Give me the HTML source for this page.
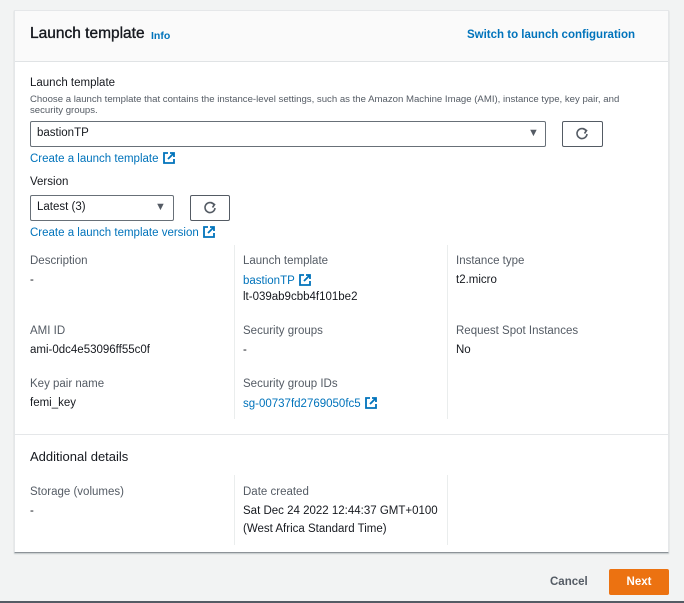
<!DOCTYPE html>
<html><head><meta charset="utf-8"><style>
*{margin:0;padding:0;box-sizing:border-box}
body{width:684px;height:603px;background:#f2f3f3;font-family:"Liberation Sans",Arial,sans-serif;color:#16191f;position:relative;overflow:hidden;font-size:11.5px}
.a{position:absolute;white-space:nowrap}
.card{position:absolute;left:14px;top:10px;width:655px;height:543px;background:#fff;border:1px solid #e5e7e9;border-bottom:1px solid #8d9398;box-shadow:0 1px 1px rgba(0,28,36,.2)}
.hdr{position:absolute;left:0;top:0;width:100%;height:51px;background:#fafafa;border-bottom:1px solid #e0e3e5}
.lnk{color:#0073bb}
.lbl{color:#545b64}
.sel{position:absolute;border:1px solid #687078;border-radius:2px;background:#fff}
.btn{position:absolute;border:1px solid #545b64;border-radius:2px;background:#fff}
.vl{position:absolute;width:1px;background:#eaeded}
.ext{display:inline-block;vertical-align:-2px;margin-left:4px}
</style></head><body>
<div class="card">
<div class="hdr"></div>
</div>
<div class="a" style="left:30px;top:25px;font-size:15.5px;-webkit-text-stroke:0.35px #16191f;color:#16191f">Launch template</div>
<div class="a lnk" style="left:151px;top:30px;font-size:10.5px;font-weight:bold">Info</div>
<div class="a lnk" style="left:467px;top:29px;font-size:11.5px;font-weight:bold">Switch to launch configuration</div>

<div class="a" style="left:30px;top:77px;font-size:11.5px">Launch template</div>
<div class="a lbl" style="left:30px;top:94px;font-size:9.6px">Choose a launch template that contains the instance-level settings, such as the Amazon Machine Image (AMI), instance type, key pair, and</div>
<div class="a lbl" style="left:30px;top:105px;font-size:9.6px">security groups.</div>
<div class="sel" style="left:30px;top:121px;width:516px;height:26px"></div>
<div class="a" style="left:37px;top:127px;font-size:11.5px">bastionTP</div>
<div class="a" style="left:528px;top:127px;font-size:11px;color:#545b64">▼</div>
<div class="btn" style="left:562px;top:121px;width:41px;height:26px"></div>
<svg class="a" style="left:575px;top:127px" width="14" height="14" viewBox="0 0 14 14"><path d="M11 3.5A5 5 0 1 0 12 7" fill="none" stroke="#545b64" stroke-width="1.6"/><path d="M8 1.5L11.5 3.5L9.5 6.5" fill="none" stroke="#545b64" stroke-width="1.6"/></svg>
<div class="a lnk" style="left:30px;top:152px;font-size:11.5px">Create a launch template<svg class="ext" width="12" height="12" viewBox="0 0 12 12"><path d="M5 1H1v10h10V7" fill="none" stroke="#0073bb" stroke-width="1.8"/><path d="M7 1h4v4M11 1L5 7" fill="none" stroke="#0073bb" stroke-width="1.8"/></svg></div>

<div class="a" style="left:30px;top:176px;font-size:11.5px">Version</div>
<div class="sel" style="left:30px;top:195px;width:144px;height:26px"></div>
<div class="a" style="left:37px;top:201px;font-size:11.5px">Latest (3)</div>
<div class="a" style="left:155px;top:201px;font-size:11px;color:#545b64">▼</div>
<div class="btn" style="left:190px;top:195px;width:40px;height:26px"></div>
<svg class="a" style="left:203px;top:201px" width="14" height="14" viewBox="0 0 14 14"><path d="M11 3.5A5 5 0 1 0 12 7" fill="none" stroke="#545b64" stroke-width="1.6"/><path d="M8 1.5L11.5 3.5L9.5 6.5" fill="none" stroke="#545b64" stroke-width="1.6"/></svg>
<div class="a lnk" style="left:30px;top:226px;font-size:11.5px">Create a launch template version<svg class="ext" width="12" height="12" viewBox="0 0 12 12"><path d="M5 1H1v10h10V7" fill="none" stroke="#0073bb" stroke-width="1.8"/><path d="M7 1h4v4M11 1L5 7" fill="none" stroke="#0073bb" stroke-width="1.8"/></svg></div>

<div class="vl" style="left:234px;top:245px;height:174px"></div>
<div class="vl" style="left:447px;top:245px;height:174px"></div>

<div class="a lbl" style="left:30px;top:255px">Description</div>
<div class="a" style="left:30px;top:274px">-</div>
<div class="a lbl" style="left:243px;top:255px">Launch template</div>
<div class="a lnk" style="left:243px;top:274px">bastionTP<svg class="ext" width="12" height="12" viewBox="0 0 12 12"><path d="M5 1H1v10h10V7" fill="none" stroke="#0073bb" stroke-width="1.8"/><path d="M7 1h4v4M11 1L5 7" fill="none" stroke="#0073bb" stroke-width="1.8"/></svg></div>
<div class="a" style="left:243px;top:291px">lt-039ab9cbb4f101be2</div>
<div class="a lbl" style="left:456px;top:255px">Instance type</div>
<div class="a" style="left:456px;top:274px">t2.micro</div>

<div class="a lbl" style="left:30px;top:325px">AMI ID</div>
<div class="a" style="left:30px;top:344px">ami-0dc4e53096ff55c0f</div>
<div class="a lbl" style="left:243px;top:325px">Security groups</div>
<div class="a" style="left:243px;top:344px">-</div>
<div class="a lbl" style="left:456px;top:325px">Request Spot Instances</div>
<div class="a" style="left:456px;top:344px">No</div>

<div class="a lbl" style="left:30px;top:378px">Key pair name</div>
<div class="a" style="left:30px;top:397px">femi_key</div>
<div class="a lbl" style="left:243px;top:378px">Security group IDs</div>
<div class="a lnk" style="left:243px;top:397px">sg-00737fd2769050fc5<svg class="ext" width="12" height="12" viewBox="0 0 12 12"><path d="M5 1H1v10h10V7" fill="none" stroke="#0073bb" stroke-width="1.8"/><path d="M7 1h4v4M11 1L5 7" fill="none" stroke="#0073bb" stroke-width="1.8"/></svg></div>

<div class="a" style="left:15px;top:434px;width:653px;height:1px;background:#e5e7e9"></div>
<div class="a" style="left:30px;top:449px;font-size:13px">Additional details</div>
<div class="vl" style="left:234px;top:475px;height:70px"></div>
<div class="vl" style="left:447px;top:475px;height:70px"></div>
<div class="a lbl" style="left:30px;top:486px">Storage (volumes)</div>
<div class="a" style="left:30px;top:505px">-</div>
<div class="a lbl" style="left:243px;top:486px">Date created</div>
<div class="a" style="left:243px;top:505px">Sat Dec 24 2022 12:44:37 GMT+0100</div>
<div class="a" style="left:243px;top:523px">(West Africa Standard Time)</div>

<div class="a" style="left:550px;top:576px;font-weight:bold;color:#545b64">Cancel</div>
<div class="a" style="left:609px;top:569px;width:60px;height:26px;background:#ec7211;border-radius:2px;color:#fff;font-weight:bold;text-align:center;line-height:26px">Next</div>
<div class="a" style="left:0;top:601px;width:684px;height:2px;background:#545b64"></div>
</body></html>
